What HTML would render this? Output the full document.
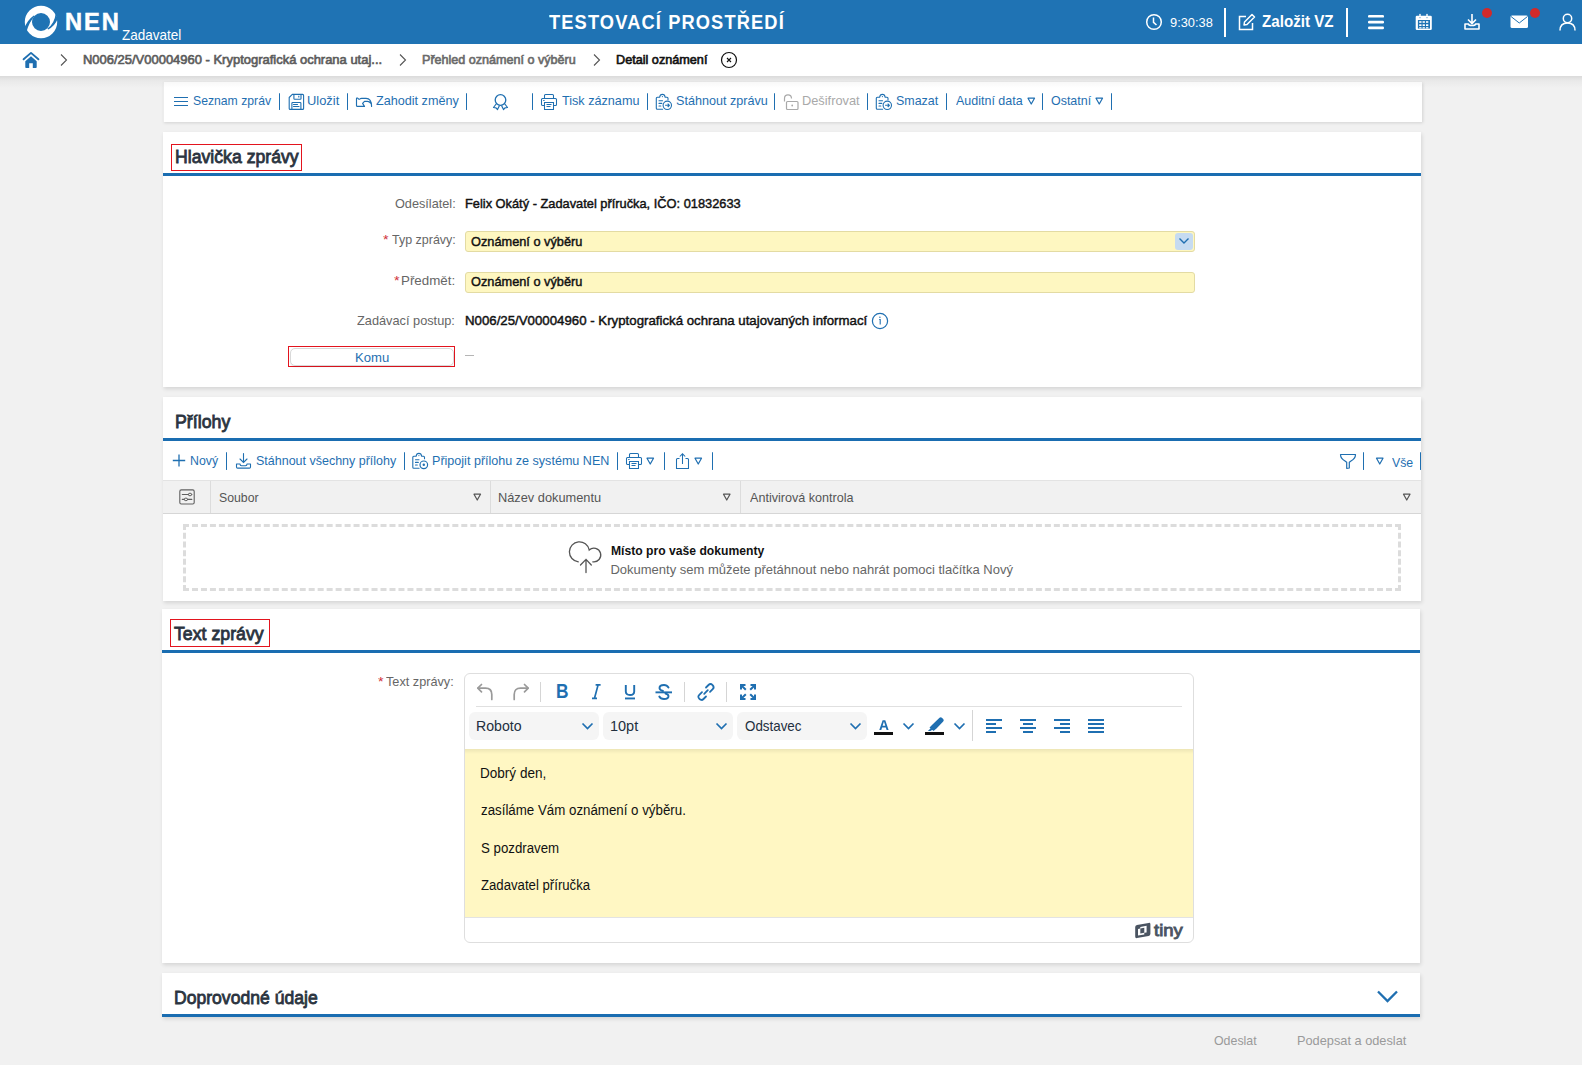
<!DOCTYPE html>
<html><head><meta charset="utf-8"><title>NEN</title>
<style>
html,body{margin:0;padding:0;}
body{width:1584px;height:1065px;overflow:hidden;position:relative;background:#ffffff;font-family:'Liberation Sans', sans-serif;}
</style></head><body>
<div style="position:absolute;left:0px;top:0px;width:1582px;height:1065px;background:#f1f1f1"></div>
<div style="position:absolute;left:1582px;top:0px;width:2px;height:1065px;background:#ffffff"></div>
<div style="position:absolute;left:0px;top:0px;width:1582px;height:44px;background:#1f73b4"></div>
<svg style="position:absolute;left:24px;top:5px;overflow:visible;" width="35" height="35" viewBox="0 0 35 35"><circle cx="17" cy="17" r="12.6" fill="none" stroke="#fff" stroke-width="7.2"/><path d="M0.2 23.5 Q 3.2 15 9.8 10.4 L 10.6 11.3 Q 5.6 16.5 2.6 26.2 Z" fill="#1f73b4"/><path d="M31.6 9.0 Q 30.6 18.5 23.4 23.6 L 24.2 24.4 Q 30.6 21.5 33.8 13.8 Z" fill="#1f73b4"/></svg>
<svg style="position:absolute;left:1145px;top:13px;overflow:visible;" width="19" height="19" viewBox="0 0 19 19"><circle cx="9" cy="9" r="7.3" fill="none" stroke="#fff" stroke-width="1.5"/><path d="M8.5 4.5 V9.3 L11.5 12" fill="none" stroke="#fff" stroke-width="1.5"/></svg>
<div style="position:absolute;left:1224px;top:8px;width:2px;height:29px;background:#fff"></div>
<svg style="position:absolute;left:1237px;top:13px;overflow:visible;" width="20" height="19" viewBox="0 0 20 19"><path d="M9 3.5 H2.5 V16.5 H15.5 V10" fill="none" stroke="#fff" stroke-width="1.5"/><path d="M7 12 L7.5 9 L15 1.5 L17.5 4 L10 11.5 Z" fill="none" stroke="#fff" stroke-width="1.5" stroke-linejoin="round"/></svg>
<div style="position:absolute;left:1346px;top:8px;width:2px;height:29px;background:#fff"></div>
<svg style="position:absolute;left:1367px;top:14px;overflow:visible;" width="19" height="17" viewBox="0 0 19 17"><rect x="1" y="1" width="16" height="2.6" rx="1.2" fill="#fff"/><rect x="1" y="6.8" width="16" height="2.6" rx="1.2" fill="#fff"/><rect x="1" y="12.6" width="16" height="2.6" rx="1.2" fill="#fff"/></svg>
<svg style="position:absolute;left:1414px;top:13px;overflow:visible;" width="20" height="19" viewBox="0 0 20 19"><rect x="1.7" y="2.8" width="16.1" height="14.2" rx="1.3" fill="#fff"/><rect x="3.9" y="7" width="12.1" height="8.6" fill="#1f73b4"/><rect x="5.2" y="8.2" width="2.3" height="1.6" fill="#fff"/><rect x="5.2" y="11.3" width="2.3" height="1.7" fill="#fff"/><rect x="5.2" y="14.2" width="2.3" height="1.2" fill="#fff"/><rect x="8.6" y="8.2" width="2.3" height="1.6" fill="#fff"/><rect x="8.6" y="11.3" width="2.3" height="1.7" fill="#fff"/><rect x="8.6" y="14.2" width="2.3" height="1.2" fill="#fff"/><rect x="12" y="8.2" width="2.3" height="1.6" fill="#fff"/><rect x="12" y="11.3" width="2.3" height="1.7" fill="#fff"/><rect x="12" y="14.2" width="2.3" height="1.2" fill="#fff"/><rect x="5.3" y="0.9" width="1.4" height="3.6" fill="#fff"/><rect x="12.3" y="0.9" width="1.4" height="3.6" fill="#fff"/><rect x="5.3" y="4.5" width="1.4" height="0.6" fill="#1f73b4"/><rect x="12.3" y="4.5" width="1.4" height="0.6" fill="#1f73b4"/></svg>
<svg style="position:absolute;left:1463px;top:13px;overflow:visible;" width="19" height="19" viewBox="0 0 19 19"><path d="M9 1 V10 M5 6.5 L9 10.5 L13 6.5" fill="none" stroke="#fff" stroke-width="1.6"/><path d="M2 11 V16 H16 V11 H12.5 C12.5 13, 5.5 13, 5.5 11 Z" fill="none" stroke="#fff" stroke-width="1.6" stroke-linejoin="round"/></svg>
<svg style="position:absolute;left:1482px;top:8px;overflow:visible;" width="11" height="11" viewBox="0 0 11 11"><circle cx="5" cy="5" r="5" fill="#d12a2a"/></svg>
<svg style="position:absolute;left:1510px;top:15px;overflow:visible;" width="20" height="15" viewBox="0 0 20 15"><rect x="0.5" y="0.5" width="17.5" height="12.5" rx="1.5" fill="#fff"/><path d="M1 1.5 L9.25 8 L17.5 1.5" fill="none" stroke="#1f73b4" stroke-width="1"/></svg>
<svg style="position:absolute;left:1530px;top:8px;overflow:visible;" width="11" height="11" viewBox="0 0 11 11"><circle cx="5" cy="5" r="5" fill="#d12a2a"/></svg>
<svg style="position:absolute;left:1559px;top:13px;overflow:visible;" width="18" height="19" viewBox="0 0 18 19"><circle cx="8.5" cy="5.5" r="4.2" fill="none" stroke="#fff" stroke-width="1.5"/><path d="M1 17.5 C1 12, 4.5 10, 8.5 10 C12.5 10, 16 12, 16 17.5" fill="none" stroke="#fff" stroke-width="1.5"/></svg>
<div style="position:absolute;left:0px;top:44px;width:1582px;height:32px;background:#fff"></div>
<svg style="position:absolute;left:22px;top:51px;overflow:visible;" width="19" height="19" viewBox="0 0 19 19"><path d="M1.6 8.3 L9 1.9 L16.4 8.3" fill="none" stroke="#1f6fb1" stroke-width="1.9" stroke-linecap="round" stroke-linejoin="round"/><path d="M3.3 10.2 L9 5.3 L14.7 10.2 V16.2 Q14.7 17 13.9 17 H10.8 V12.3 H7.2 V17 H4.1 Q3.3 17 3.3 16.2 Z" fill="#1f6fb1"/></svg>
<svg style="position:absolute;left:60px;top:53px;overflow:visible;" width="9" height="14" viewBox="0 0 9 14"><g transform="translate(0.000,0.500)"><path d="M1 1 L6.5 6.5 L1 12" fill="none" stroke="#555" stroke-width="1.1"/></g></svg>
<svg style="position:absolute;left:399px;top:53px;overflow:visible;" width="9" height="14" viewBox="0 0 9 14"><g transform="translate(0.000,0.500)"><path d="M1 1 L6.5 6.5 L1 12" fill="none" stroke="#555" stroke-width="1.1"/></g></svg>
<svg style="position:absolute;left:593px;top:53px;overflow:visible;" width="9" height="14" viewBox="0 0 9 14"><g transform="translate(0.000,0.500)"><path d="M1 1 L6.5 6.5 L1 12" fill="none" stroke="#555" stroke-width="1.1"/></g></svg>
<svg style="position:absolute;left:720px;top:51px;overflow:visible;" width="19" height="19" viewBox="0 0 19 19"><circle cx="9" cy="9" r="7.5" fill="none" stroke="#111" stroke-width="1.2"/><path d="M7 7 L11 11 M11 7 L7 11" stroke="#111" stroke-width="1.1"/></svg>
<div style="position:absolute;left:163px;top:82px;width:1259px;height:39.5px;background:#fff;box-sizing:border-box;border-left:1px solid #ededed;box-shadow:1px 1px 3px rgba(0,0,0,0.13)"></div>
<svg style="position:absolute;left:173px;top:96px;overflow:visible;" width="17" height="12" viewBox="0 0 17 12"><path d="M1 1.5 H15 M1 5.5 H15 M1 9.5 H15" stroke="#1f6fb1" stroke-width="1.1"/></svg>
<div style="position:absolute;left:279px;top:93px;width:1.3000000000000114px;height:17px;background:#1f6fb1;border-radius:1px"></div>
<svg style="position:absolute;left:288px;top:93px;overflow:visible;" width="18" height="18" viewBox="0 0 18 18"><g transform="translate(0.000,0.500)"><path d="M4.3 0.9 H14.6 Q15.6 0.9 15.6 1.9 V14.9 Q15.6 15.9 14.6 15.9 H2.2 Q1.2 15.9 1.2 14.9 V4 Z" fill="none" stroke="#1f6fb1" stroke-width="1.1" stroke-linejoin="round"/><path d="M5.9 0.9 V5 Q5.9 5.8 6.7 5.8 H12.2 Q13 5.8 13 5 V0.9" fill="none" stroke="#1f6fb1" stroke-width="1.1"/><path d="M10.8 2.3 V4.1" stroke="#1f6fb1" stroke-width="1.1"/><path d="M3.9 15.9 V9.8 Q3.9 9 4.7 9 H12.1 Q12.9 9 12.9 9.8 V15.9" fill="none" stroke="#1f6fb1" stroke-width="1.1"/><path d="M5.5 11 H9.5 M5.5 13 H11" stroke="#1f6fb1" stroke-width="1.1" stroke-linecap="round"/></g></svg>
<div style="position:absolute;left:347px;top:93px;width:1.3000000000000114px;height:17px;background:#1f6fb1;border-radius:1px"></div>
<svg style="position:absolute;left:355px;top:95px;overflow:visible;" width="19" height="16" viewBox="0 0 19 16"><path d="M16.6 11.5 Q16.6 3.3 11 3.3 H6.5 Q5.5 3.3 5 3.8 Q4.2 4.6 3.4 3.8 L2.6 3.1 Q1.5 2.6 1.5 3.8 V10.4 Q1.5 11.4 2.5 11.4 H9.5 L7.6 8.4 L9.5 6.3 H12.5 Q14.6 6.3 15.6 8.2" fill="none" stroke="#1f6fb1" stroke-width="1.15" stroke-linejoin="round" stroke-linecap="round"/></svg>
<div style="position:absolute;left:466px;top:93px;width:1.3000000000000114px;height:17px;background:#1f6fb1;border-radius:1px"></div>
<svg style="position:absolute;left:492px;top:93px;overflow:visible;" width="18" height="18" viewBox="0 0 18 18"><g transform="translate(0.000,0.500)"><circle cx="8.5" cy="6.5" r="5.3" fill="none" stroke="#1f6fb1" stroke-width="1.3"/><path d="M4.5 10 L1.5 14 L4 14.3 L5.5 16 L7.5 12 M12.5 10 L15.5 14 L13 14.3 L11.5 16 L9.5 12" fill="none" stroke="#1f6fb1" stroke-width="1.2" stroke-linejoin="round"/></g></svg>
<div style="position:absolute;left:532px;top:93px;width:1.2999999999999545px;height:17px;background:#1f6fb1;border-radius:1px"></div>
<svg style="position:absolute;left:540px;top:93px;overflow:visible;" width="19" height="19" viewBox="0 0 19 19"><path d="M4.5 5.5 V2.5 Q4.5 1.5 5.5 1.5 H12.5 Q13.5 1.5 13.5 2.5 V5.5" fill="none" stroke="#1f6fb1" stroke-width="1.05"/><path d="M4.5 12.5 H2.5 Q1.5 12.5 1.5 11.5 V6.5 Q1.5 5.5 2.5 5.5 H15.5 Q16.5 5.5 16.5 6.5 V11.5 Q16.5 12.5 15.5 12.5 H13.5" fill="none" stroke="#1f6fb1" stroke-width="1.05"/><path d="M4.5 9.5 H13.5 V16.5 H4.5 Z" fill="#fff" stroke="#1f6fb1" stroke-width="1.05"/><path d="M6.5 11.5 H11.5 M6.5 13.5 H10.5 M3.2 7.5 H4.6" stroke="#1f6fb1" stroke-width="1.05"/></svg>
<div style="position:absolute;left:647px;top:93px;width:1.2999999999999545px;height:17px;background:#1f6fb1;border-radius:1px"></div>
<svg style="position:absolute;left:655px;top:93px;overflow:visible;" width="18" height="18" viewBox="0 0 18 18"><g transform="translate(0.000,0.500)"><path d="M7.6 15.7 H2.3 Q1.3 15.7 1.3 14.7 V4.8 Q1.3 3.8 2.3 3.8 H4.6 Q5 0.9 7.4 0.9 Q9.8 0.9 10.2 3.8 H12 Q13 3.8 13 4.8 V6.3" fill="none" stroke="#1f6fb1" stroke-width="1.1" stroke-linecap="round" stroke-linejoin="round"/><circle cx="7.4" cy="3.1" r="0.6" fill="#1f6fb1"/><path d="M4 7.3 H7.5 M4 9.9 H6.8 M4 12.5 H5.8" stroke="#1f6fb1" stroke-width="1.1" stroke-linecap="round"/><circle cx="12.3" cy="11.8" r="4.2" fill="#fff" stroke="#1f6fb1" stroke-width="1.1"/><path d="M10.1 11.8 H14.4 M12.7 10.1 L14.4 11.8 L12.7 13.5" fill="none" stroke="#1f6fb1" stroke-width="1.1" stroke-linejoin="round"/></g></svg>
<div style="position:absolute;left:774px;top:93px;width:1.2999999999999545px;height:17px;background:#1f6fb1;border-radius:1px"></div>
<svg style="position:absolute;left:781px;top:93px;overflow:visible;" width="19" height="18" viewBox="0 0 19 18"><g transform="translate(0.000,0.500)"><path d="M3.5 8 V5 Q3.5 1.3 7 1.3 Q10.5 1.3 10.5 5" fill="none" stroke="#a9a9a9" stroke-width="1.2"/><rect x="5.5" y="8" width="11.5" height="8" rx="1" fill="none" stroke="#a9a9a9" stroke-width="1.2"/><circle cx="11.2" cy="12" r="0.9" fill="#a9a9a9"/></g></svg>
<div style="position:absolute;left:867px;top:93px;width:1.2999999999999545px;height:17px;background:#1f6fb1;border-radius:1px"></div>
<svg style="position:absolute;left:875px;top:93px;overflow:visible;" width="18" height="18" viewBox="0 0 18 18"><g transform="translate(0.000,0.500)"><path d="M7.6 15.7 H2.3 Q1.3 15.7 1.3 14.7 V4.8 Q1.3 3.8 2.3 3.8 H4.6 Q5 0.9 7.4 0.9 Q9.8 0.9 10.2 3.8 H12 Q13 3.8 13 4.8 V6.3" fill="none" stroke="#1f6fb1" stroke-width="1.1" stroke-linecap="round" stroke-linejoin="round"/><circle cx="7.4" cy="3.1" r="0.6" fill="#1f6fb1"/><path d="M4 7.3 H7.5 M4 9.9 H6.8 M4 12.5 H5.8" stroke="#1f6fb1" stroke-width="1.1" stroke-linecap="round"/><circle cx="12.3" cy="11.8" r="4.2" fill="#fff" stroke="#1f6fb1" stroke-width="1.1"/><path d="M10.1 11.8 H14.4 M12.7 10.1 L14.4 11.8 L12.7 13.5" fill="none" stroke="#1f6fb1" stroke-width="1.1" stroke-linejoin="round"/></g></svg>
<div style="position:absolute;left:946px;top:93px;width:1.2999999999999545px;height:17px;background:#1f6fb1;border-radius:1px"></div>
<svg style="position:absolute;left:1027px;top:97px;overflow:visible;" width="10" height="10" viewBox="0 0 10 10"><path d="M1 1.2 H7.5 L4.25 7 Z" fill="none" stroke="#1f6fb1" stroke-width="1.2" stroke-linejoin="round"/></svg>
<div style="position:absolute;left:1042px;top:93px;width:1.2999999999999545px;height:17px;background:#1f6fb1;border-radius:1px"></div>
<svg style="position:absolute;left:1095px;top:97px;overflow:visible;" width="10" height="10" viewBox="0 0 10 10"><path d="M1 1.2 H7.5 L4.25 7 Z" fill="none" stroke="#1f6fb1" stroke-width="1.2" stroke-linejoin="round"/></svg>
<div style="position:absolute;left:1111px;top:93px;width:1.2999999999999545px;height:17px;background:#1f6fb1;border-radius:1px"></div>
<div style="position:absolute;left:163px;top:132px;width:1258px;height:255px;background:#fff;box-shadow:1px 2px 4px rgba(0,0,0,0.12)"></div>
<div style="position:absolute;left:171px;top:144px;width:131px;height:27px;box-sizing:border-box;border:1px solid #e3141e"></div>
<div style="position:absolute;left:163px;top:173px;width:1258px;height:3px;background:#1a6db1"></div>
<div style="position:absolute;left:465px;top:231px;width:730px;height:21px;box-sizing:border-box;background:#fef7c1;border:1px solid #e3dba3;border-radius:3px"></div>
<div style="position:absolute;left:1175px;top:232.5px;width:18px;height:17.5px;background:#c6dbf1;border-radius:3px"></div>
<svg style="position:absolute;left:1178px;top:236px;overflow:visible;" width="13" height="11" viewBox="0 0 13 11"><path d="M1.5 2.5 L6 7 L10.5 2.5" fill="none" stroke="#1f6fb1" stroke-width="1.4"/></svg>
<div style="position:absolute;left:465px;top:272px;width:730px;height:21px;box-sizing:border-box;background:#fef7c1;border:1px solid #e3dba3;border-radius:3px"></div>
<svg style="position:absolute;left:871px;top:312px;overflow:visible;" width="19" height="19" viewBox="0 0 19 19"><circle cx="9" cy="9" r="7.6" fill="none" stroke="#1f6fb1" stroke-width="1.2"/><path d="M8.2 7.5 H9.2 V12.5" fill="none" stroke="#1f6fb1" stroke-width="1.1"/><circle cx="8.9" cy="5.3" r="0.7" fill="#1f6fb1"/></svg>
<div style="position:absolute;left:288px;top:346px;width:167px;height:21px;box-sizing:border-box;border:1px solid #e3141e"></div>
<div style="position:absolute;left:290px;top:347.5px;width:164px;height:18.5px;box-sizing:border-box;border:1px solid #d9d9d9;border-radius:5px;background:#fff;box-shadow:0 1px 2px rgba(0,0,0,0.08)"></div>
<div style="position:absolute;left:465px;top:355px;width:9px;height:1px;background:#b5b5b5"></div>
<div style="position:absolute;left:163px;top:397px;width:1258px;height:204px;background:#fff;box-shadow:1px 2px 4px rgba(0,0,0,0.12)"></div>
<div style="position:absolute;left:163px;top:438px;width:1258px;height:3px;background:#1a6db1"></div>
<svg style="position:absolute;left:172px;top:454px;overflow:visible;" width="15" height="14" viewBox="0 0 15 14"><path d="M7 0.5 V12.5 M0.8 6.5 H13.2" stroke="#1f6fb1" stroke-width="1.3"/></svg>
<div style="position:absolute;left:226px;top:452px;width:1.3000000000000114px;height:18px;background:#1f6fb1;border-radius:1px"></div>
<svg style="position:absolute;left:235px;top:452px;overflow:visible;" width="18" height="18" viewBox="0 0 18 18"><g transform="translate(0.000,0.500)"><path d="M8.5 1 V10 M5 6.5 L8.5 10 L12 6.5" fill="none" stroke="#1f6fb1" stroke-width="1.1" stroke-linecap="round"/><path d="M1.5 11.5 V14.5 Q1.5 15.6 2.6 15.6 H14.4 Q15.5 15.6 15.5 14.5 V11.5 H12 Q12 13.2 10.5 13.2 H6.5 Q5 13.2 5 11.5 Z" fill="none" stroke="#1f6fb1" stroke-width="1.1" stroke-linejoin="round"/></g></svg>
<div style="position:absolute;left:404px;top:452px;width:1.3000000000000114px;height:18px;background:#1f6fb1;border-radius:1px"></div>
<svg style="position:absolute;left:411px;top:452px;overflow:visible;" width="18" height="18" viewBox="0 0 18 18"><g transform="translate(0.500,0.500)"><path d="M7.6 15.7 H2.3 Q1.3 15.7 1.3 14.7 V4.8 Q1.3 3.8 2.3 3.8 H4.6 Q5 0.9 7.4 0.9 Q9.8 0.9 10.2 3.8 H12 Q13 3.8 13 4.8 V6.3" fill="none" stroke="#1f6fb1" stroke-width="1.1" stroke-linecap="round" stroke-linejoin="round"/><circle cx="7.4" cy="3.1" r="0.6" fill="#1f6fb1"/><path d="M4 7.3 H7.5 M4 9.9 H6.8 M4 12.5 H5.8" stroke="#1f6fb1" stroke-width="1.1" stroke-linecap="round"/><circle cx="12.3" cy="12.3" r="3.8" fill="#fff" stroke="#1f6fb1" stroke-width="1.2"/><circle cx="12.3" cy="12.3" r="1.2" fill="#1f6fb1"/></g></svg>
<div style="position:absolute;left:617px;top:452px;width:1.2999999999999545px;height:18px;background:#1f6fb1;border-radius:1px"></div>
<svg style="position:absolute;left:625px;top:452px;overflow:visible;" width="19" height="19" viewBox="0 0 19 19"><path d="M4.5 5.5 V2.5 Q4.5 1.5 5.5 1.5 H12.5 Q13.5 1.5 13.5 2.5 V5.5" fill="none" stroke="#1f6fb1" stroke-width="1.05"/><path d="M4.5 12.5 H2.5 Q1.5 12.5 1.5 11.5 V6.5 Q1.5 5.5 2.5 5.5 H15.5 Q16.5 5.5 16.5 6.5 V11.5 Q16.5 12.5 15.5 12.5 H13.5" fill="none" stroke="#1f6fb1" stroke-width="1.05"/><path d="M4.5 9.5 H13.5 V16.5 H4.5 Z" fill="#fff" stroke="#1f6fb1" stroke-width="1.05"/><path d="M6.5 11.5 H11.5 M6.5 13.5 H10.5 M3.2 7.5 H4.6" stroke="#1f6fb1" stroke-width="1.05"/></svg>
<svg style="position:absolute;left:646px;top:457px;overflow:visible;" width="10" height="10" viewBox="0 0 10 10"><path d="M1 1.2 H7.5 L4.25 7 Z" fill="none" stroke="#1f6fb1" stroke-width="1.2" stroke-linejoin="round"/></svg>
<div style="position:absolute;left:664px;top:452px;width:1.2999999999999545px;height:18px;background:#1f6fb1;border-radius:1px"></div>
<svg style="position:absolute;left:675px;top:452px;overflow:visible;" width="17" height="19" viewBox="0 0 17 19"><path d="M4.5 6.5 H2.5 Q1.5 6.5 1.5 7.5 V16.5 H13.5 V7.5 Q13.5 6.5 12.5 6.5 H10.5" fill="none" stroke="#1f6fb1" stroke-width="1.05"/><path d="M7.5 12 V1.8 M4.8 4.5 L7.5 1.8 L10.2 4.5" fill="none" stroke="#1f6fb1" stroke-width="1.05"/></svg>
<svg style="position:absolute;left:694px;top:457px;overflow:visible;" width="10" height="10" viewBox="0 0 10 10"><path d="M1 1.2 H7.5 L4.25 7 Z" fill="none" stroke="#1f6fb1" stroke-width="1.2" stroke-linejoin="round"/></svg>
<div style="position:absolute;left:712px;top:452px;width:1.2999999999999545px;height:18px;background:#1f6fb1;border-radius:1px"></div>
<svg style="position:absolute;left:1339px;top:452px;overflow:visible;" width="19" height="18" viewBox="0 0 19 18"><g transform="translate(0.000,0.500)"><path d="M1.5 2 H16.5 Q16.5 6 12 8.5 L10.3 9.8 V15.5 L7.7 16 V9.8 L6 8.5 Q1.5 6 1.5 2 Z" fill="none" stroke="#1f6fb1" stroke-width="1.2" stroke-linejoin="round"/></g></svg>
<div style="position:absolute;left:1363px;top:452px;width:1.2999999999999545px;height:18px;background:#1f6fb1;border-radius:1px"></div>
<svg style="position:absolute;left:1375px;top:457px;overflow:visible;" width="10" height="10" viewBox="0 0 10 10"><g transform="translate(0.500,0.000)"><path d="M1 1.2 H7.5 L4.25 7 Z" fill="none" stroke="#1f6fb1" stroke-width="1.2" stroke-linejoin="round"/></g></svg>
<div style="position:absolute;left:1420px;top:452px;width:1.2999999999999545px;height:18px;background:#1f6fb1;border-radius:1px"></div>
<div style="position:absolute;left:163px;top:480px;width:1258px;height:34px;box-sizing:border-box;background:#f1f1f1;border-top:1px solid #e3e3e3;border-bottom:1px solid #d6d6d6"></div>
<div style="position:absolute;left:210px;top:481px;width:1px;height:32px;background:#dcdcdc"></div>
<div style="position:absolute;left:490px;top:481px;width:1px;height:32px;background:#dcdcdc"></div>
<div style="position:absolute;left:740px;top:481px;width:1px;height:32px;background:#dcdcdc"></div>
<svg style="position:absolute;left:178px;top:488px;overflow:visible;" width="19" height="19" viewBox="0 0 19 19"><rect x="1.8" y="1.9" width="14.4" height="14.1" rx="1.5" fill="none" stroke="#606060" stroke-width="1.1"/><path d="M4.3 6.5 H10.3 M13.7 6.5 H13.8 M4.3 11.4 H6.2 M9.6 11.4 H13.8" stroke="#606060" stroke-width="1.1" stroke-linecap="round"/><ellipse cx="12" cy="6.5" rx="1.7" ry="1.3" fill="none" stroke="#606060" stroke-width="1"/><ellipse cx="7.9" cy="11.4" rx="1.7" ry="1.3" fill="none" stroke="#606060" stroke-width="1"/></svg>
<svg style="position:absolute;left:473px;top:493px;overflow:visible;" width="10" height="10" viewBox="0 0 10 10"><path d="M1 1.2 H7.5 L4.25 7 Z" fill="none" stroke="#555" stroke-width="1.2" stroke-linejoin="round"/></svg>
<svg style="position:absolute;left:722px;top:493px;overflow:visible;" width="10" height="10" viewBox="0 0 10 10"><g transform="translate(0.500,0.000)"><path d="M1 1.2 H7.5 L4.25 7 Z" fill="none" stroke="#555" stroke-width="1.2" stroke-linejoin="round"/></g></svg>
<svg style="position:absolute;left:1402px;top:493px;overflow:visible;" width="10" height="10" viewBox="0 0 10 10"><g transform="translate(0.500,0.000)"><path d="M1 1.2 H7.5 L4.25 7 Z" fill="none" stroke="#555" stroke-width="1.2" stroke-linejoin="round"/></g></svg>
<div style="position:absolute;left:183px;top:524px;width:1218px;height:67px;box-sizing:border-box;border:3px dashed #dcdcdc"></div>
<svg style="position:absolute;left:568px;top:540px;overflow:visible;" width="35" height="35" viewBox="0 0 35 35"><path d="M10.3 21.8 A 10 10 0 1 1 21.2 9.9 A 6.9 6.9 0 1 1 24.8 21.8" fill="none" stroke="#555" stroke-width="1.3" stroke-linecap="round"/><path d="M18 32.5 V19.4 M12.5 25 L18 19.4 L23.3 25" fill="none" stroke="#555" stroke-width="1.3" stroke-linecap="round"/></svg>
<div style="position:absolute;left:162px;top:609px;width:1258px;height:354px;background:#fff;box-shadow:1px 2px 4px rgba(0,0,0,0.12)"></div>
<div style="position:absolute;left:170px;top:619px;width:100px;height:28px;box-sizing:border-box;border:1px solid #e3141e"></div>
<div style="position:absolute;left:162px;top:650px;width:1258px;height:3px;background:#1a6db1"></div>
<div style="position:absolute;left:464px;top:673px;width:730px;height:270px;box-sizing:border-box;border:1px solid #dedede;border-radius:6px;background:#fff;overflow:hidden"></div>
<div style="position:absolute;left:465px;top:749px;width:728px;height:168px;background:#fff7c3"></div>
<div style="position:absolute;left:465px;top:749px;width:728px;height:5px;background:linear-gradient(rgba(0,0,0,0.07),rgba(0,0,0,0))"></div>
<div style="position:absolute;left:465px;top:917px;width:728px;height:1px;background:#e3e3e3"></div>
<div style="position:absolute;left:476px;top:706px;width:706px;height:1px;background:#e0e0e0"></div>
<svg style="position:absolute;left:476px;top:682px;overflow:visible;" width="19" height="20" viewBox="0 0 19 20"><path d="M5.5 2.5 L1.8 6.2 L5.5 9.9" fill="none" stroke="#9a9a9a" stroke-width="1.7" stroke-linejoin="round" stroke-linecap="round"/><path d="M2.2 6.2 H9.5 Q15.8 6.2 15.8 12.5 V17.5" fill="none" stroke="#9a9a9a" stroke-width="1.7" stroke-linecap="round"/></svg>
<svg style="position:absolute;left:512px;top:682px;overflow:visible;" width="19" height="20" viewBox="0 0 19 20"><path d="M12.5 2.5 L16.2 6.2 L12.5 9.9" fill="none" stroke="#9a9a9a" stroke-width="1.7" stroke-linejoin="round" stroke-linecap="round"/><path d="M15.8 6.2 H8.5 Q2.2 6.2 2.2 12.5 V17.5" fill="none" stroke="#9a9a9a" stroke-width="1.7" stroke-linecap="round"/></svg>
<div style="position:absolute;left:540px;top:682px;width:1px;height:20px;background:#d5d5d5"></div>
<svg style="position:absolute;left:590px;top:683px;overflow:visible;" width="13" height="18" viewBox="0 0 13 18"><path d="M5.6 1.9 H10.6 M8.1 1.9 L4.5 15.3 M2 15.3 H7" fill="none" stroke="#1f6fb1" stroke-width="1.7"/></svg>
<svg style="position:absolute;left:624px;top:684px;overflow:visible;" width="13" height="17" viewBox="0 0 13 17"><path d="M1.8 1 V7.5 Q1.8 11 6 11 Q10.2 11 10.2 7.5 V1" fill="none" stroke="#1f6fb1" stroke-width="1.9"/><rect x="1" y="13.5" width="10" height="1.9" fill="#1f6fb1"/></svg>
<svg style="position:absolute;left:655px;top:684px;overflow:visible;" width="19" height="17" viewBox="0 0 19 17"><path d="M13.5 3.5 Q12 1 9 1 Q4.5 1 4.5 4 Q4.5 6 8 7 M10.5 9.5 Q13.5 10.5 13.5 12.3 Q13.5 15 9 15 Q5.5 15 4.3 12.5" fill="none" stroke="#1f6fb1" stroke-width="1.9" stroke-linecap="round"/><rect x="0.5" y="7.4" width="16.5" height="1.9" fill="#1f6fb1"/></svg>
<div style="position:absolute;left:684px;top:682px;width:1px;height:20px;background:#d5d5d5"></div>
<svg style="position:absolute;left:696px;top:682px;overflow:visible;" width="21" height="21" viewBox="0 0 21 21"><path d="M8.2 11.8 L11.8 8.2" stroke="#1f6fb1" stroke-width="1.8" stroke-linecap="round"/><path d="M10 5.5 L12.5 3 Q14.5 1 16.6 3.1 Q18.7 5.2 16.7 7.2 L14 9.9" fill="none" stroke="#1f6fb1" stroke-width="1.8" stroke-linecap="round"/><path d="M10 14.5 L7.5 17 Q5.5 19 3.4 16.9 Q1.3 14.8 3.3 12.8 L6 10.1" fill="none" stroke="#1f6fb1" stroke-width="1.8" stroke-linecap="round"/></svg>
<div style="position:absolute;left:726px;top:682px;width:1px;height:20px;background:#d5d5d5"></div>
<svg style="position:absolute;left:739px;top:683px;overflow:visible;" width="19" height="19" viewBox="0 0 19 19"><g fill="#1f6fb1"><path d="M1 1 H6.5 V3 H4.4 L7.5 6.1 L6.1 7.5 L3 4.4 V6.5 H1 Z"/><path d="M17 1 H11.5 V3 H13.6 L10.5 6.1 L11.9 7.5 L15 4.4 V6.5 H17 Z"/><path d="M1 17 H6.5 V15 H4.4 L7.5 11.9 L6.1 10.5 L3 13.6 V11.5 H1 Z"/><path d="M17 17 H11.5 V15 H13.6 L10.5 11.9 L11.9 10.5 L15 13.6 V11.5 H17 Z"/></g></svg>
<div style="position:absolute;left:469px;top:712px;width:130px;height:28px;background:#f5f5f5;border-radius:6px"></div>
<svg style="position:absolute;left:581px;top:722px;overflow:visible;" width="13" height="10" viewBox="0 0 13 10"><g transform="translate(0.500,0.000)"><path d="M1 1.5 L6 6.5 L11 1.5" fill="none" stroke="#1f6fb1" stroke-width="1.7"/></g></svg>
<div style="position:absolute;left:603px;top:712px;width:130px;height:28px;background:#f5f5f5;border-radius:6px"></div>
<svg style="position:absolute;left:715px;top:722px;overflow:visible;" width="13" height="10" viewBox="0 0 13 10"><g transform="translate(0.500,0.000)"><path d="M1 1.5 L6 6.5 L11 1.5" fill="none" stroke="#1f6fb1" stroke-width="1.7"/></g></svg>
<div style="position:absolute;left:737px;top:712px;width:130px;height:28px;background:#f5f5f5;border-radius:6px"></div>
<svg style="position:absolute;left:849px;top:722px;overflow:visible;" width="13" height="10" viewBox="0 0 13 10"><g transform="translate(0.500,0.000)"><path d="M1 1.5 L6 6.5 L11 1.5" fill="none" stroke="#1f6fb1" stroke-width="1.7"/></g></svg>
<svg style="position:absolute;left:874px;top:716px;overflow:visible;" width="21" height="21" viewBox="0 0 21 21"><path fill-rule="evenodd" d="M5.3 13.9 L8.6 4.2 H11.3 L14.6 13.9 H12.6 L11.8 11.4 H8.1 L7.3 13.9 Z M8.6 9.7 H11.3 L9.95 5.6 Z" fill="#1f6fb1"/></svg>
<div style="position:absolute;left:874px;top:732px;width:19px;height:3px;background:#111"></div>
<svg style="position:absolute;left:902px;top:722px;overflow:visible;" width="13" height="10" viewBox="0 0 13 10"><g transform="translate(0.500,0.000)"><path d="M1 1.5 L6 6.5 L11 1.5" fill="none" stroke="#1f6fb1" stroke-width="1.7"/></g></svg>
<svg style="position:absolute;left:925px;top:716px;overflow:visible;" width="21" height="17" viewBox="0 0 21 17"><path d="M3 15 L5.5 12.5 L4.5 11.5 L7.5 8.5 L14.5 1.8 Q15.8 0.6 17.1 1.9 L18.2 3 Q19.4 4.3 18.2 5.5 L11.5 12.5 L8.5 15 L7.5 14 Z" fill="#1f6fb1"/><path d="M3 15 H6.5 L5 13.5 Z" fill="#1f6fb1"/></svg>
<div style="position:absolute;left:925px;top:732px;width:19px;height:3px;background:#111"></div>
<svg style="position:absolute;left:953px;top:722px;overflow:visible;" width="13" height="10" viewBox="0 0 13 10"><g transform="translate(0.500,0.000)"><path d="M1 1.5 L6 6.5 L11 1.5" fill="none" stroke="#1f6fb1" stroke-width="1.7"/></g></svg>
<div style="position:absolute;left:972px;top:710px;width:1px;height:31px;background:#d5d5d5"></div>
<svg style="position:absolute;left:985px;top:718px;overflow:visible;" width="19" height="17" viewBox="0 0 19 17"><rect x="1" y="1" width="16" height="2" fill="#1f6fb1"/><rect x="1" y="5" width="10" height="2" fill="#1f6fb1"/><rect x="1" y="9" width="16" height="2" fill="#1f6fb1"/><rect x="1" y="13" width="10" height="2" fill="#1f6fb1"/></svg>
<svg style="position:absolute;left:1019px;top:718px;overflow:visible;" width="19" height="17" viewBox="0 0 19 17"><rect x="1" y="1" width="16" height="2" fill="#1f6fb1"/><rect x="4" y="5" width="10" height="2" fill="#1f6fb1"/><rect x="1" y="9" width="16" height="2" fill="#1f6fb1"/><rect x="4" y="13" width="10" height="2" fill="#1f6fb1"/></svg>
<svg style="position:absolute;left:1053px;top:718px;overflow:visible;" width="19" height="17" viewBox="0 0 19 17"><rect x="1" y="1" width="16" height="2" fill="#1f6fb1"/><rect x="7" y="5" width="10" height="2" fill="#1f6fb1"/><rect x="1" y="9" width="16" height="2" fill="#1f6fb1"/><rect x="7" y="13" width="10" height="2" fill="#1f6fb1"/></svg>
<svg style="position:absolute;left:1087px;top:718px;overflow:visible;" width="19" height="17" viewBox="0 0 19 17"><rect x="1" y="1" width="16" height="2" fill="#1f6fb1"/><rect x="1" y="5" width="16" height="2" fill="#1f6fb1"/><rect x="1" y="9" width="16" height="2" fill="#1f6fb1"/><rect x="1" y="13" width="16" height="2" fill="#1f6fb1"/></svg>
<svg style="position:absolute;left:1134px;top:922px;overflow:visible;" width="19" height="19" viewBox="0 0 19 19"><path d="M3 2.9 Q1.2 3.3 1.2 5 V14.6 Q1.2 16.5 3 16.1 L14.6 13.9 Q16.4 13.5 16.4 11.8 V2.3 Q16.4 0.5 14.6 0.9 Z" fill="#4a5461"/><path d="M6.3 4.9 L12.6 3.7 V10.4 L10.3 10.8 V12.4 L4 13.6 V7 L6.3 6.6 Z" fill="#fff"/><path d="M6.3 6.6 L10.3 5.85 V10.8 L6.3 11.55 Z" fill="#4a5461"/><path d="M7.2 8 L9.4 7.6 V9.8 L7.2 10.2 Z" fill="#4a5461"/></svg>
<div style="position:absolute;left:162px;top:973px;width:1258px;height:44px;background:#fff;box-shadow:1px 2px 4px rgba(0,0,0,0.12)"></div>
<div style="position:absolute;left:162px;top:1014px;width:1258px;height:3px;background:#1a6db1"></div>
<svg style="position:absolute;left:1376px;top:989px;overflow:visible;" width="24" height="16" viewBox="0 0 24 16"><path d="M2 2.5 L11.5 12 L21 2.5" fill="none" stroke="#1f6fb1" stroke-width="2.3"/></svg>
<div style="position:absolute;left:0px;top:76px;width:1582px;height:12px;background:linear-gradient(rgba(0,0,0,0.095),rgba(0,0,0,0.03) 40%,rgba(0,0,0,0))"></div>
<div id="t0" style="position:absolute;left:65.01px;top:10.00px;font-size:24px;line-height:24px;font-weight:700;color:#fff;white-space:nowrap;transform:scaleX(0.9859);transform-origin:0 0;letter-spacing:2px;-webkit-text-stroke:0.5px #fff;">NEN<span style="display:inline-block;width:0;height:0"></span></div>
<div id="t1" style="position:absolute;left:122.00px;top:28.00px;font-size:14.5px;line-height:14.5px;font-weight:400;color:#fff;white-space:nowrap;transform:scaleX(0.9298);transform-origin:0 0;">Zadavatel<span style="display:inline-block;width:0;height:0"></span></div>
<div id="t2" style="position:absolute;left:549.00px;top:11.00px;font-size:21px;line-height:21px;font-weight:700;color:#fff;white-space:nowrap;transform:scaleX(0.8693);transform-origin:0 0;letter-spacing:1.3px;">TESTOVACÍ PROSTŘEDÍ<span style="display:inline-block;width:0;height:0"></span></div>
<div id="t3" style="position:absolute;left:1170.00px;top:16.00px;font-size:13.5px;line-height:13.5px;font-weight:400;color:#fff;white-space:nowrap;transform:scaleX(0.9498);transform-origin:0 0;">9:30:38<span style="display:inline-block;width:0;height:0"></span></div>
<div id="t4" style="position:absolute;left:1262.00px;top:14.00px;font-size:16px;line-height:16px;font-weight:700;color:#fff;white-space:nowrap;transform:scaleX(0.9468);transform-origin:0 0;">Založit VZ<span style="display:inline-block;width:0;height:0"></span></div>
<div id="t5" style="position:absolute;left:83.00px;top:53.00px;font-size:13px;line-height:13px;font-weight:400;color:#5c5c5c;white-space:nowrap;transform:scaleX(0.9973);transform-origin:0 0;-webkit-text-stroke:0.65px #5c5c5c;">N006/25/V00004960 - Kryptografická ochrana utaj...<span style="display:inline-block;width:0;height:0"></span></div>
<div id="t6" style="position:absolute;left:422.33px;top:53.00px;font-size:13px;line-height:13px;font-weight:400;color:#6a6a6a;white-space:nowrap;transform:scaleX(0.9673);transform-origin:0 0;-webkit-text-stroke:0.65px #6a6a6a;">Přehled oznámení o výběru<span style="display:inline-block;width:0;height:0"></span></div>
<div id="t7" style="position:absolute;left:616.03px;top:53.00px;font-size:13px;line-height:13px;font-weight:400;color:#111;white-space:nowrap;transform:scaleX(0.9729);transform-origin:0 0;-webkit-text-stroke:0.65px #111;">Detail oznámení<span style="display:inline-block;width:0;height:0"></span></div>
<div id="t8" style="position:absolute;left:193.30px;top:94.00px;font-size:13px;line-height:13px;font-weight:400;color:#1f6fb1;white-space:nowrap;transform:scaleX(0.9391);transform-origin:0 0;">Seznam zpráv<span style="display:inline-block;width:0;height:0"></span></div>
<div id="t9" style="position:absolute;left:307.21px;top:94.00px;font-size:13px;line-height:13px;font-weight:400;color:#1f6fb1;white-space:nowrap;transform:scaleX(0.9908);transform-origin:0 0;">Uložit<span style="display:inline-block;width:0;height:0"></span></div>
<div id="t10" style="position:absolute;left:376.00px;top:94.00px;font-size:13px;line-height:13px;font-weight:400;color:#1f6fb1;white-space:nowrap;transform:scaleX(0.9713);transform-origin:0 0;">Zahodit změny<span style="display:inline-block;width:0;height:0"></span></div>
<div id="t11" style="position:absolute;left:562.00px;top:94.00px;font-size:13px;line-height:13px;font-weight:400;color:#1f6fb1;white-space:nowrap;transform:scaleX(0.9713);transform-origin:0 0;">Tisk záznamu<span style="display:inline-block;width:0;height:0"></span></div>
<div id="t12" style="position:absolute;left:675.80px;top:94.00px;font-size:13px;line-height:13px;font-weight:400;color:#1f6fb1;white-space:nowrap;transform:scaleX(0.9688);transform-origin:0 0;">Stáhnout zprávu<span style="display:inline-block;width:0;height:0"></span></div>
<div id="t13" style="position:absolute;left:802.02px;top:94.00px;font-size:13px;line-height:13px;font-weight:400;color:#a9a9a9;white-space:nowrap;transform:scaleX(0.9843);transform-origin:0 0;">Dešifrovat<span style="display:inline-block;width:0;height:0"></span></div>
<div id="t14" style="position:absolute;left:896.40px;top:94.00px;font-size:13px;line-height:13px;font-weight:400;color:#1f6fb1;white-space:nowrap;transform:scaleX(0.9582);transform-origin:0 0;">Smazat<span style="display:inline-block;width:0;height:0"></span></div>
<div id="t15" style="position:absolute;left:955.60px;top:94.00px;font-size:13px;line-height:13px;font-weight:400;color:#1f6fb1;white-space:nowrap;transform:scaleX(0.9607);transform-origin:0 0;">Auditní data<span style="display:inline-block;width:0;height:0"></span></div>
<div id="t16" style="position:absolute;left:1051.00px;top:94.00px;font-size:13px;line-height:13px;font-weight:400;color:#1f6fb1;white-space:nowrap;transform:scaleX(0.9576);transform-origin:0 0;">Ostatní<span style="display:inline-block;width:0;height:0"></span></div>
<div id="t17" style="position:absolute;left:174.77px;top:147.00px;font-size:19px;line-height:19px;font-weight:400;color:#2b3440;white-space:nowrap;transform:scaleX(0.9296);transform-origin:0 0;-webkit-text-stroke:0.85px #2b3440;">Hlavička zprávy<span style="display:inline-block;width:0;height:0"></span></div>
<div id="t18" style="position:absolute;left:394.80px;top:197.00px;font-size:13.4px;line-height:13.4px;font-weight:400;color:#666666;white-space:nowrap;transform:scaleX(0.9480);transform-origin:0 0;">Odesílatel:<span style="display:inline-block;width:0;height:0"></span></div>
<div id="t19" style="position:absolute;left:464.54px;top:197.00px;font-size:13.4px;line-height:13.4px;font-weight:400;color:#111;white-space:nowrap;transform:scaleX(0.9571);transform-origin:0 0;-webkit-text-stroke:0.45px #111;">Felix Okátý - Zadavatel příručka, IČO: 01832633<span style="display:inline-block;width:0;height:0"></span></div>
<div id="t20" style="position:absolute;left:391.70px;top:233.00px;font-size:13.4px;line-height:13.4px;font-weight:400;color:#666666;white-space:nowrap;transform:scaleX(0.9315);transform-origin:0 0;">Typ zprávy:<span style="display:inline-block;width:0;height:0"></span></div>
<div id="t21" style="position:absolute;left:383.10px;top:233.00px;font-size:13px;line-height:13px;font-weight:400;color:#d0343b;white-space:nowrap;transform:scaleX(1.1000);transform-origin:0 0;">*<span style="display:inline-block;width:0;height:0"></span></div>
<div id="t22" style="position:absolute;left:470.60px;top:235.00px;font-size:13.4px;line-height:13.4px;font-weight:400;color:#111;white-space:nowrap;transform:scaleX(0.9536);transform-origin:0 0;-webkit-text-stroke:0.45px #111;">Oznámení o výběru<span style="display:inline-block;width:0;height:0"></span></div>
<div id="t23" style="position:absolute;left:401.40px;top:274.00px;font-size:13.4px;line-height:13.4px;font-weight:400;color:#666666;white-space:nowrap;transform:scaleX(0.9961);transform-origin:0 0;">Předmět:<span style="display:inline-block;width:0;height:0"></span></div>
<div id="t24" style="position:absolute;left:393.80px;top:274.00px;font-size:13px;line-height:13px;font-weight:400;color:#d0343b;white-space:nowrap;transform:scaleX(1.1000);transform-origin:0 0;">*<span style="display:inline-block;width:0;height:0"></span></div>
<div id="t25" style="position:absolute;left:470.60px;top:275.00px;font-size:13.4px;line-height:13.4px;font-weight:400;color:#111;white-space:nowrap;transform:scaleX(0.9536);transform-origin:0 0;-webkit-text-stroke:0.45px #111;">Oznámení o výběru<span style="display:inline-block;width:0;height:0"></span></div>
<div id="t26" style="position:absolute;left:357.00px;top:314.00px;font-size:13.4px;line-height:13.4px;font-weight:400;color:#666666;white-space:nowrap;transform:scaleX(0.9529);transform-origin:0 0;">Zadávací postup:<span style="display:inline-block;width:0;height:0"></span></div>
<div id="t27" style="position:absolute;left:464.51px;top:314.00px;font-size:13.4px;line-height:13.4px;font-weight:400;color:#111;white-space:nowrap;transform:scaleX(0.9896);transform-origin:0 0;-webkit-text-stroke:0.45px #111;">N006/25/V00004960 - Kryptografická ochrana utajovaných informací<span style="display:inline-block;width:0;height:0"></span></div>
<div id="t28" style="position:absolute;left:355.42px;top:351.00px;font-size:13.4px;line-height:13.4px;font-weight:400;color:#1f6fb1;white-space:nowrap;transform:scaleX(0.9781);transform-origin:0 0;">Komu<span style="display:inline-block;width:0;height:0"></span></div>
<div id="t29" style="position:absolute;left:174.57px;top:412.00px;font-size:19px;line-height:19px;font-weight:400;color:#2b3440;white-space:nowrap;transform:scaleX(0.9346);transform-origin:0 0;-webkit-text-stroke:0.85px #2b3440;">Přílohy<span style="display:inline-block;width:0;height:0"></span></div>
<div id="t30" style="position:absolute;left:190.45px;top:454.00px;font-size:13px;line-height:13px;font-weight:400;color:#1f6fb1;white-space:nowrap;transform:scaleX(0.9479);transform-origin:0 0;">Nový<span style="display:inline-block;width:0;height:0"></span></div>
<div id="t31" style="position:absolute;left:255.70px;top:454.00px;font-size:13px;line-height:13px;font-weight:400;color:#1f6fb1;white-space:nowrap;transform:scaleX(0.9606);transform-origin:0 0;">Stáhnout všechny přílohy<span style="display:inline-block;width:0;height:0"></span></div>
<div id="t32" style="position:absolute;left:432.03px;top:454.00px;font-size:13px;line-height:13px;font-weight:400;color:#1f6fb1;white-space:nowrap;transform:scaleX(0.9664);transform-origin:0 0;">Připojit přílohu ze systému NEN<span style="display:inline-block;width:0;height:0"></span></div>
<div id="t33" style="position:absolute;left:1392.00px;top:456.00px;font-size:13px;line-height:13px;font-weight:400;color:#1f6fb1;white-space:nowrap;transform:scaleX(0.9472);transform-origin:0 0;">Vše<span style="display:inline-block;width:0;height:0"></span></div>
<div id="t34" style="position:absolute;left:219.30px;top:491.00px;font-size:13px;line-height:13px;font-weight:400;color:#555;white-space:nowrap;transform:scaleX(0.9439);transform-origin:0 0;">Soubor<span style="display:inline-block;width:0;height:0"></span></div>
<div id="t35" style="position:absolute;left:498.22px;top:491.00px;font-size:13px;line-height:13px;font-weight:400;color:#555;white-space:nowrap;transform:scaleX(0.9841);transform-origin:0 0;">Název dokumentu<span style="display:inline-block;width:0;height:0"></span></div>
<div id="t36" style="position:absolute;left:749.60px;top:491.00px;font-size:13px;line-height:13px;font-weight:400;color:#555;white-space:nowrap;transform:scaleX(0.9674);transform-origin:0 0;">Antivirová kontrola<span style="display:inline-block;width:0;height:0"></span></div>
<div id="t37" style="position:absolute;left:611.40px;top:544.00px;font-size:13px;line-height:13px;font-weight:700;color:#111;white-space:nowrap;transform:scaleX(0.9341);transform-origin:0 0;">Místo pro vaše dokumenty<span style="display:inline-block;width:0;height:0"></span></div>
<div id="t38" style="position:absolute;left:610.40px;top:563.00px;font-size:13px;line-height:13px;font-weight:400;color:#666;white-space:nowrap;">Dokumenty sem můžete přetáhnout nebo nahrát pomoci tlačítka Nový<span style="display:inline-block;width:0;height:0"></span></div>
<div id="t39" style="position:absolute;left:174.30px;top:624.00px;font-size:19px;line-height:19px;font-weight:400;color:#2b3440;white-space:nowrap;transform:scaleX(0.9339);transform-origin:0 0;-webkit-text-stroke:0.85px #2b3440;">Text zprávy<span style="display:inline-block;width:0;height:0"></span></div>
<div id="t40" style="position:absolute;left:386.30px;top:675.00px;font-size:13.4px;line-height:13.4px;font-weight:400;color:#666666;white-space:nowrap;transform:scaleX(0.9474);transform-origin:0 0;">Text zprávy:<span style="display:inline-block;width:0;height:0"></span></div>
<div id="t41" style="position:absolute;left:377.70px;top:675.00px;font-size:13px;line-height:13px;font-weight:400;color:#d0343b;white-space:nowrap;transform:scaleX(1.1000);transform-origin:0 0;">*<span style="display:inline-block;width:0;height:0"></span></div>
<div id="t42" style="position:absolute;left:555.81px;top:682.00px;font-size:19.4px;line-height:19.4px;font-weight:700;color:#1f6fb1;white-space:nowrap;transform:scaleX(0.8923);transform-origin:0 0;">B<span style="display:inline-block;width:0;height:0"></span></div>
<div id="t43" style="position:absolute;left:476.28px;top:720.00px;font-size:13.9px;line-height:13.9px;font-weight:400;color:#222f3e;white-space:nowrap;transform:scaleX(1.0166);transform-origin:0 0;">Roboto<span style="display:inline-block;width:0;height:0"></span></div>
<div id="t44" style="position:absolute;left:610.26px;top:720.00px;font-size:13.9px;line-height:13.9px;font-weight:400;color:#222f3e;white-space:nowrap;transform:scaleX(1.0429);transform-origin:0 0;">10pt<span style="display:inline-block;width:0;height:0"></span></div>
<div id="t45" style="position:absolute;left:745.30px;top:720.00px;font-size:13.9px;line-height:13.9px;font-weight:400;color:#222f3e;white-space:nowrap;transform:scaleX(0.9620);transform-origin:0 0;">Odstavec<span style="display:inline-block;width:0;height:0"></span></div>
<div id="t46" style="position:absolute;left:480.03px;top:766.00px;font-size:14px;line-height:14px;font-weight:400;color:#111;white-space:nowrap;transform:scaleX(0.9671);transform-origin:0 0;">Dobrý den,<span style="display:inline-block;width:0;height:0"></span></div>
<div id="t47" style="position:absolute;left:481.00px;top:803.00px;font-size:14px;line-height:14px;font-weight:400;color:#111;white-space:nowrap;transform:scaleX(0.9504);transform-origin:0 0;">zasíláme Vám oznámení o výběru.<span style="display:inline-block;width:0;height:0"></span></div>
<div id="t48" style="position:absolute;left:481.00px;top:841.00px;font-size:14px;line-height:14px;font-weight:400;color:#111;white-space:nowrap;transform:scaleX(0.9472);transform-origin:0 0;">S pozdravem<span style="display:inline-block;width:0;height:0"></span></div>
<div id="t49" style="position:absolute;left:481.00px;top:878.00px;font-size:14px;line-height:14px;font-weight:400;color:#111;white-space:nowrap;transform:scaleX(0.9410);transform-origin:0 0;">Zadavatel příručka<span style="display:inline-block;width:0;height:0"></span></div>
<div id="t50" style="position:absolute;left:1154.00px;top:922.00px;font-size:16.5px;line-height:16.5px;font-weight:400;color:#4a5461;white-space:nowrap;transform:scaleX(1.1201);transform-origin:0 0;-webkit-text-stroke:0.85px #4a5461;">tiny<span style="display:inline-block;width:0;height:0"></span></div>
<div id="t51" style="position:absolute;left:173.57px;top:988.00px;font-size:19px;line-height:19px;font-weight:400;color:#2b3440;white-space:nowrap;transform:scaleX(0.9251);transform-origin:0 0;-webkit-text-stroke:0.85px #2b3440;">Doprovodné údaje<span style="display:inline-block;width:0;height:0"></span></div>
<div id="t52" style="position:absolute;left:1214.40px;top:1034.00px;font-size:13.4px;line-height:13.4px;font-weight:400;color:#9a9a9a;white-space:nowrap;transform:scaleX(0.9240);transform-origin:0 0;">Odeslat<span style="display:inline-block;width:0;height:0"></span></div>
<div id="t53" style="position:absolute;left:1296.85px;top:1034.00px;font-size:13.4px;line-height:13.4px;font-weight:400;color:#9a9a9a;white-space:nowrap;transform:scaleX(0.9532);transform-origin:0 0;">Podepsat a odeslat<span style="display:inline-block;width:0;height:0"></span></div>
</body></html>
